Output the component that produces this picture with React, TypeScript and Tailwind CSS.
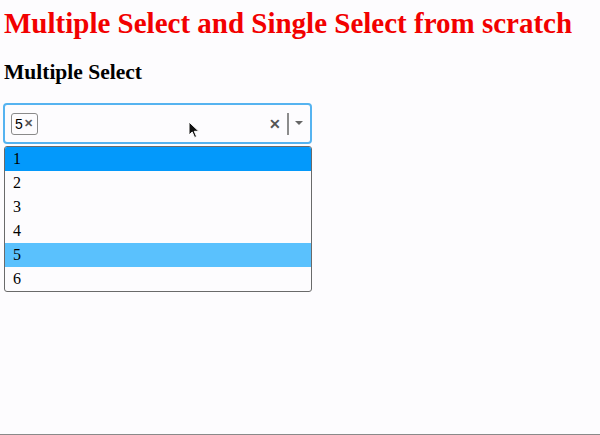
import { useState } from 'react'

const options = ['1', '2', '3', '4', '5', '6']

function Cursor() {
  return (
    <svg
      className="absolute left-[188px] top-[121px]"
      width="12"
      height="18"
      viewBox="0 0 12 18"
    >
      <path
        d="M1 1 L1 14 L4.2 11 L6.6 16.5 L8.6 15.6 L6.3 10.3 L10.8 10.3 Z"
        fill="#111"
        stroke="#fff"
        strokeWidth="1"
      />
    </svg>
  )
}

export default function App() {
  const [selected] = useState<string[]>(['5'])
  const [highlighted] = useState('1')

  return (
    <div className="relative h-[435px] w-[600px] overflow-hidden bg-[#fdfcfe] font-['Liberation_Serif',serif] text-black">
      <div className="px-[4px] pt-[7px]">
        <h1 className="text-[29px] font-bold leading-[33px] text-[#f20000]">
          Multiple Select and Single Select from scratch
        </h1>
        <h2 className="mt-[20px] text-[21.5px] font-bold leading-[25px]">
          Multiple Select
        </h2>

        <div className="mt-[18px] w-[309px] -ml-[1px]">
          <div className="flex h-[41px] items-center rounded-[4px] border-2 border-solid border-[#55b3f0] bg-[#fdfcfe] pl-[6px] pr-[7px]">
            <div className="flex flex-1 items-center">
              {selected.map((s) => (
                <span
                  key={s}
                  className="flex h-[22px] items-center rounded-[3px] border border-[#8a8a8a] pl-[3px] pr-[4px] font-['Liberation_Sans',sans-serif] text-[14px] leading-none"
                >
                  {s}
                  <span className="ml-[1px] text-[11px] font-bold text-[#555]">✕</span>
                </span>
              ))}
            </div>
            <span className="font-['Liberation_Sans',sans-serif] text-[14px] font-bold leading-none text-[#555]">
              ✕
            </span>
            <span className="ml-[6px] h-[22px] w-[2px] bg-[#8c8c8c]" />
            <svg className="ml-[6px]" width="8" height="5" viewBox="0 0 8 5">
              <path d="M0 0 L8 0 L4 4 Z" fill="#666" />
            </svg>
          </div>

          <ul className="mt-[2px] ml-[1px] overflow-hidden rounded-[3px] border border-[#6a6a6a] bg-[#fdfcfe]">
            {options.map((o) => (
              <li
                key={o}
                className={
                  'h-[24px] pl-[8px] text-[16px] leading-[24px] ' +
                  (o === highlighted
                    ? 'bg-[#0399fb]'
                    : selected.includes(o)
                      ? 'bg-[#5ac1fd]'
                      : '')
                }
              >
                {o}
              </li>
            ))}
          </ul>
        </div>
      </div>

      <Cursor />
      <div className="absolute bottom-0 left-0 h-[1px] w-full bg-[#8a8a8a]" />
    </div>
  )
}
